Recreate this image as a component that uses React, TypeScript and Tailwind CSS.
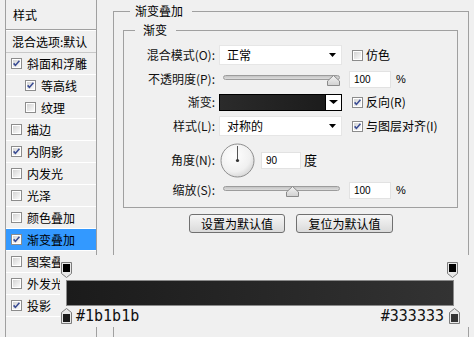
import React from "react";

const CJK = { fontFamily: '"Noto Sans CJK SC", "Noto Sans", sans-serif' } as React.CSSProperties;

function Check({ checked }: { checked?: boolean }) {
  return (
    <svg width="11" height="11" viewBox="0 0 11 11" className="shrink-0 block">
      <defs>
        <linearGradient id="cbg" x1="0" y1="0" x2="1" y2="1">
          <stop offset="0" stopColor="#d4d4d4" />
          <stop offset="1" stopColor="#fafafa" />
        </linearGradient>
      </defs>
      <rect x="0.5" y="0.5" width="10" height="10" fill="#ffffff" stroke="#8c8c8c" />
      <rect x="2" y="2" width="7" height="7" fill="url(#cbg)" />
      {checked && (
        <path d="M2.6 5.4 L4.4 7.4 L8.4 2.8" stroke="#3a4c94" strokeWidth="1.6" fill="none" />
      )}
    </svg>
  );
}

function Arrow({ w = 7 }: { w?: number }) {
  return (
    <svg width={w} height="4" viewBox={`0 0 ${w} 4`} className="block">
      <path d={`M0 0 H${w} L${w / 2} 4 Z`} fill="#000" />
    </svg>
  );
}

function ListRow({
  label,
  checked,
  indent,
  selected,
}: {
  label: string;
  checked?: boolean;
  indent?: boolean;
  selected?: boolean;
}) {
  return (
    <div
      className={
        "h-[22px] flex items-center border-b border-white " +
        (selected ? "bg-[#3399ff] " : "") +
        (indent ? "pl-[19px]" : "pl-[5px]")
      }
    >
      <Check checked={checked} />
      <span className="ml-[5px] text-[12px] leading-[14px] whitespace-nowrap text-black">{label}</span>
    </div>
  );
}

function Slider({ thumb }: { thumb: number }) {
  return (
    <div className="relative w-[123px] h-[12px]">
      <div className="ml-[4px] mt-[1px] w-[117px] h-[5px] rounded-full border border-[#9c9c9c] bg-gradient-to-b from-[#c4c4c4] to-[#dcdcdc]" />
      <svg
        width="13"
        height="11"
        viewBox="0 0 13 11"
        className="absolute top-[0px]"
        style={{ left: thumb }}
      >
        <defs>
          <linearGradient id="thg" x1="0" y1="0" x2="0" y2="1">
            <stop offset="0" stopColor="#f4f4f4" />
            <stop offset="1" stopColor="#d0d0d0" />
          </linearGradient>
        </defs>
        <path d="M6.5 0.5 L12.5 6 V10.5 H0.5 V6 Z" fill="url(#thg)" stroke="#8a8a8a" />
      </svg>
    </div>
  );
}

function NumInput({ value, w = 42 }: { value: string; w?: number }) {
  return (
    <div
      className="h-[17px] bg-white border border-[#e2e2e2] flex items-center pl-[4px] text-[10px] text-black"
      style={{ width: w, fontFamily: '"Liberation Sans", Arial, sans-serif' }}
    >
      {value}
    </div>
  );
}

function Label({ children }: { children: React.ReactNode }) {
  return (
    <div className="w-[91px] shrink-0 text-right text-[12px] leading-[14px] whitespace-nowrap text-[#111]">
      {children}
    </div>
  );
}

function Select({ value }: { value: string }) {
  return (
    <div className="ml-[4px] w-[123px] h-[20px] bg-white border border-[#e6e6e6] flex items-center justify-between pl-[7px] pr-[5px]">
      <span className="text-[12px] leading-[14px] text-black">{value}</span>
      <Arrow />
    </div>
  );
}

function StopTop() {
  return (
    <svg width="11" height="16" viewBox="0 0 11 16" className="block">
      <path d="M0.5 0.5 H10.5 V11.5 L5.5 15.5 L0.5 11.5 Z" fill="#e8e8e8" stroke="#7c7c7c" />
      <rect x="2" y="2" width="7" height="8" fill="#000" />
    </svg>
  );
}

function StopBottom({ color }: { color: string }) {
  return (
    <svg width="11" height="16" viewBox="0 0 11 16" className="block">
      <path d="M5.5 0.5 L10.5 4.5 V15.5 H0.5 V4.5 Z" fill="#e8e8e8" stroke="#7c7c7c" />
      <rect x="2" y="6" width="7" height="8" fill={color} />
    </svg>
  );
}

export default function App() {
  return (
    <div
      className="relative w-[474px] h-[337px] overflow-hidden bg-[#f0f0f0] flex text-black"
      style={CJK}
    >
      {/* left list */}
      <div className="ml-[5px] w-[92px] shrink-0 border-l border-r border-[#a0a0a0] h-[400px]">
        <div className="h-[30px] flex items-center pl-[7px] text-[12px] leading-[14px] border-b border-[#a0a0a0]">
          样式
        </div>
        <div className="h-[23px] flex items-center pl-[6px] text-[12px] leading-[14px] whitespace-nowrap border-t border-white border-b border-b-[#c8c8c8]">
          混合选项:默认
        </div>
        <ListRow label="斜面和浮雕" checked />
        <ListRow label="等高线" checked indent />
        <ListRow label="纹理" indent />
        <ListRow label="描边" />
        <ListRow label="内阴影" checked />
        <ListRow label="内发光" />
        <ListRow label="光泽" />
        <ListRow label="颜色叠加" />
        <ListRow label="渐变叠加" checked selected />
        <ListRow label="图案叠加" />
        <ListRow label="外发光" />
        <ListRow label="投影" checked />
        <div className="h-[22px] border-b border-white" />
      </div>

      {/* main */}
      <div className="ml-[16px] w-[356px] shrink-0">
        <fieldset className="mt-[2px] h-[400px] border border-[#a0a0a0]">
          <legend className="ml-[16px] pl-[5px] pr-[9px] text-[12px] leading-[18px]">渐变叠加</legend>
          <fieldset className="mt-[1px] ml-[9px] w-[335px] border border-[#a0a0a0] pb-[7px]">
            <legend className="ml-[11px] pl-[8px] pr-[9px] text-[12px] leading-[18px]">渐变</legend>
            <div className="pt-[5px] flex flex-col">
              {/* row 1 */}
              <div className="h-[22px] flex items-center">
                <Label>混合模式(O):</Label>
                <Select value="正常" />
                <div className="ml-[10px]">
                  <Check />
                </div>
                <span className="ml-[3px] text-[12px] leading-[14px]">仿色</span>
              </div>
              {/* row 2 */}
              <div className="h-[26px] flex items-center">
                <Label>不透明度(P):</Label>
                <div className="ml-[4px] mt-[2px]">
                  <Slider thumb={108} />
                </div>
                <div className="ml-[7px]">
                  <NumInput value="100" />
                </div>
                <span className="ml-[5px] text-[11px]" style={{ fontFamily: '"Liberation Sans", Arial, sans-serif' }}>
                  %
                </span>
              </div>
              {/* row 3 */}
              <div className="h-[20px] flex items-center">
                <Label>渐变:</Label>
                <div className="ml-[4px] w-[123px] h-[17px] border border-black flex">
                  <div className="w-[105px] h-full bg-gradient-to-r from-[#2b2b2b] to-[#1c1c1c]" />
                  <div className="flex-1 h-full bg-white border-l border-black flex items-center justify-center">
                    <Arrow w={9} />
                  </div>
                </div>
                <div className="ml-[10px]">
                  <Check checked />
                </div>
                <span className="ml-[3px] text-[12px] leading-[14px]">反向(R)</span>
              </div>
              {/* row 4 */}
              <div className="h-[28px] flex items-center">
                <Label>样式(L):</Label>
                <Select value="对称的" />
                <div className="ml-[10px]">
                  <Check checked />
                </div>
                <span className="ml-[3px] text-[12px] leading-[14px] whitespace-nowrap">与图层对齐(I)</span>
              </div>
              {/* row 5 */}
              <div className="h-[40px] flex items-center">
                <Label>角度(N):</Label>
                <svg width="35" height="35" viewBox="0 0 35 35" className="ml-[5px] block">
                  <defs>
                    <radialGradient id="dial" cx="0.4" cy="0.35" r="0.7">
                      <stop offset="0" stopColor="#ffffff" />
                      <stop offset="0.7" stopColor="#f0f0f0" />
                      <stop offset="1" stopColor="#d4d4d4" />
                    </radialGradient>
                  </defs>
                  <circle cx="17.5" cy="17.5" r="16.5" fill="url(#dial)" stroke="#8e8e8e" />
                  <line x1="17.5" y1="17.5" x2="17.5" y2="3" stroke="#555" strokeWidth="1" />
                  <circle cx="17.5" cy="17.5" r="1.6" fill="#333" />
                </svg>
                <div className="ml-[6px]">
                  <NumInput value="90" w={40} />
                </div>
                <span className="ml-[3px] text-[13px] leading-[14px]">度</span>
              </div>
              {/* row 6 */}
              <div className="h-[20px] flex items-center">
                <Label>缩放(S):</Label>
                <div className="ml-[4px] mt-[3px]">
                  <Slider thumb={67} />
                </div>
                <div className="ml-[7px]">
                  <NumInput value="100" />
                </div>
                <span className="ml-[5px] text-[11px]" style={{ fontFamily: '"Liberation Sans", Arial, sans-serif' }}>
                  %
                </span>
              </div>
            </div>
          </fieldset>
          <div className="mt-[6px] flex justify-center gap-[11px]">
            <button className="w-[96px] h-[19px] rounded-[3px] border border-[#707070] bg-gradient-to-b from-[#f6f6f6] to-[#dadada] text-[12px] leading-[14px] flex items-center justify-center">
              设置为默认值
            </button>
            <button className="w-[97px] h-[19px] rounded-[3px] border border-[#707070] bg-gradient-to-b from-[#f6f6f6] to-[#dadada] text-[12px] leading-[14px] flex items-center justify-center">
              复位为默认值
            </button>
          </div>
        </fieldset>
      </div>

      {/* gradient editor overlay */}
      <div className="absolute left-[60px] top-[255px] w-[414px] h-[72px] bg-[#f0f0f0] pt-[7px]">
        <div className="w-[398px] pl-[1px] flex justify-between">
          <StopTop />
          <StopTop />
        </div>
        <div className="mt-[2px] ml-[6px] w-[388px] h-[26px] border border-[#8a8a8a] bg-gradient-to-r from-[#1b1b1b] to-[#333333]" />
        <div className="mt-[2px] w-[400px] pl-[1px] flex items-start">
          <StopBottom color="#1b1b1b" />
          <span
            className="ml-[4px] mt-[0px] text-[15px] leading-[16px] text-[#111]"
            style={{ fontFamily: '"DejaVu Sans Mono", "Liberation Mono", monospace' }}
          >
            #1b1b1b
          </span>
          <span
            className="ml-auto mr-[5px] text-[15px] leading-[16px] text-[#111]"
            style={{ fontFamily: '"DejaVu Sans Mono", "Liberation Mono", monospace' }}
          >
            #333333
          </span>
          <StopBottom color="#333333" />
        </div>
      </div>
    </div>
  );
}
